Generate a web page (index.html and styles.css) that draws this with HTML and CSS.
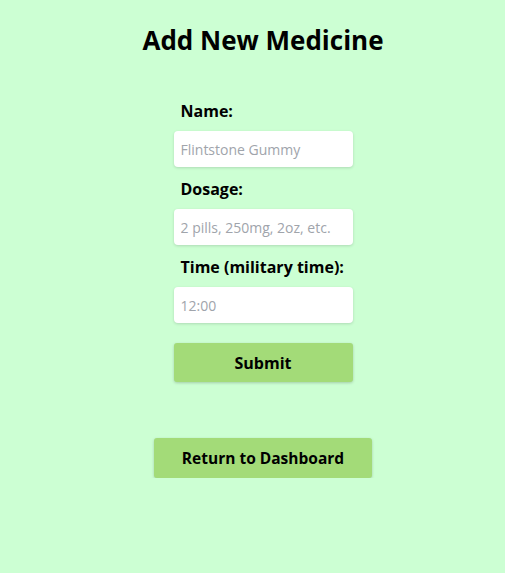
FILE: index.html
```html
<!DOCTYPE html>
<html lang="en">
<head>
  <meta charset="UTF-8">
  <meta name="viewport" content="width=device-width, initial-scale=1">
  <title>Add New Medicine</title>
  <link rel="stylesheet" href="styles.css">
</head>
<body>
  <div class="page">
    <h1>Add New Medicine</h1>

    <form class="medicine-form">
      <label class="field-label" for="name">Name:</label>
      <input class="field-input" id="name" type="text" placeholder="Flintstone Gummy">

      <label class="field-label" for="dosage">Dosage:</label>
      <input class="field-input" id="dosage" type="text" placeholder="2 pills, 250mg, 2oz, etc.">

      <label class="field-label" for="time">Time (military time):</label>
      <input class="field-input" id="time" type="text" placeholder="12:00">

      <button class="btn submit-btn" type="button">Submit</button>
    </form>

    <button class="btn return-btn" type="button">Return to Dashboard</button>
  </div>
</body>
</html>
```

FILE: styles.css
```css
:root {
  --bg-color: #CCFFD3;
  --text-color: #000000;
  --button-bg: #A3DB78;
  --placeholder: #A0A4AB;
}

body {
  font-family: "Open Sans", "Noto Sans", Arial, sans-serif;
  background-color: var(--bg-color);
  color: var(--text-color);
  margin: 0;
}

.page {
  display: flex;
  flex-direction: column;
  align-items: center;
  padding-left: 21px;
  padding-top: 23px;
}

h1 {
  font-size: 26px;
  font-weight: 700;
  margin: 0 0 43px;
  line-height: 34px;
}

.medicine-form {
  display: flex;
  flex-direction: column;
  width: 179px;
}

.field-label {
  font-size: 16px;
  font-weight: 700;
  padding-left: 7px;
  line-height: 22px;
  margin-bottom: 9px;
}

.field-input {
  height: 36px;
  box-sizing: border-box;
  border: none;
  border-radius: 4px;
  background: #fff;
  box-shadow: 0 1px 3px rgba(0,0,0,0.15);
  padding: 0 7px;
  font-family: inherit;
  font-size: 14px;
  margin-bottom: 11px;
}

.field-input::placeholder {
  color: var(--placeholder);
}

.btn {
  background-color: var(--button-bg);
  border: none;
  border-radius: 3px;
  box-shadow: 0 1px 3px rgba(0,0,0,0.2);
  font-family: inherit;
  font-size: 16px;
  font-weight: 700;
  color: var(--text-color);
  height: 39px;
}

.submit-btn {
  margin-top: 9px;
  width: 179px;
}

.return-btn {
  margin-top: 56px;
  width: 218px;
  height: 40px;
  font-size: 15.5px;
}
```
